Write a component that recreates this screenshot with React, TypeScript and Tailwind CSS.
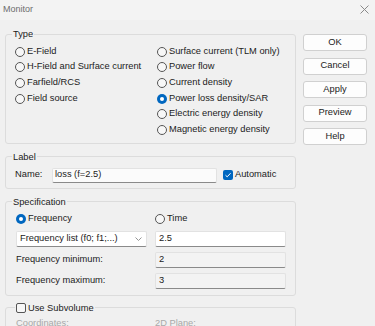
import React from "react";

const font = { fontFamily: '"Liberation Sans", Arial, sans-serif' };

const Radio = ({ checked = false, label }: { checked?: boolean; label: string }) => (
  <div className="flex items-center gap-[2px] h-[15.6px]">
    {checked ? (
      <span className="w-[10px] h-[10px] rounded-full bg-[#0067c0] flex items-center justify-center shrink-0">
        <span className="w-[4px] h-[4px] rounded-full bg-white" />
      </span>
    ) : (
      <span className="w-[10px] h-[10px] rounded-full border border-[#555] bg-[#f7f7f7] shrink-0" />
    )}
    <span className="whitespace-nowrap">{label}</span>
  </div>
);

const Group = ({
  legend,
  children,
  className = "",
  legendClass = "ml-[6px]",
}: {
  legend: React.ReactNode;
  children: React.ReactNode;
  className?: string;
  legendClass?: string;
}) => (
  <fieldset className={`border border-[#dcdcdc] rounded-[3px] ${className}`}>
    <legend className={`px-[1px] leading-[12px] ${legendClass}`}>{legend}</legend>
    {children}
  </fieldset>
);

const Field = ({ value, white = false }: { value: string; white?: boolean }) => (
  <div
    className={`h-[16px] w-[131px] border border-[#e2e2e2] border-b-[#8a8a8a] rounded-[2px] px-[3px] flex items-center ${
      white ? "bg-white" : "bg-[#f3f3f3]"
    }`}
  >
    {value}
  </div>
);

const buttons = ["OK", "Cancel", "Apply", "Preview", "Help"];

export default function App() {
  return (
    <div className="w-[375px] h-[326px] overflow-hidden bg-[#f0f0f0] text-[9.3px] text-[#1b1b1b]" style={font}>
      {/* title bar */}
      <div className="h-[20px] bg-[#f3f3f3] flex items-center justify-between pl-[3px] pr-[6px]">
        <span className="text-[#6e6e6e] text-[9px]">Monitor</span>
        <svg width="9" height="9" viewBox="0 0 9 9" className="-mt-[1px]">
          <path d="M0.5 0.5L8.5 8.5M8.5 0.5L0.5 8.5" stroke="#8a8a8a" strokeWidth="1" />
        </svg>
      </div>

      <div className="flex gap-[7px] pl-[5px] pt-[8px]">
        {/* left panel */}
        <div className="w-[291px] flex flex-col gap-[7px]">
          <Group legend="Type">
            <div className="grid grid-cols-[142px_1fr] pl-[9px] pt-[4px] pb-[5px]">
              <div className="flex flex-col">
                <Radio label="E-Field" />
                <Radio label="H-Field and Surface current" />
                <Radio label="Farfield/RCS" />
                <Radio label="Field source" />
              </div>
              <div className="flex flex-col">
                <Radio label="Surface current (TLM only)" />
                <Radio label="Power flow" />
                <Radio label="Current density" />
                <Radio checked label="Power loss density/SAR" />
                <Radio label="Electric energy density" />
                <Radio label="Magnetic energy density" />
              </div>
            </div>
          </Group>

          <Group legend="Label">
            <div className="flex items-center pl-[9px] pt-[5px] pb-[5px]">
              <span className="w-[37px]">Name:</span>
              <div className="h-[15px] w-[165px] bg-[#fbfbfb] border border-[#e2e2e2] border-b-[#8a8a8a] rounded-[2px] px-[2px] flex items-center">
                loss (f=2.5)
              </div>
              <span className="ml-[6px] w-[10px] h-[10px] rounded-[2px] bg-[#0067c0] flex items-center justify-center">
                <svg width="8" height="8" viewBox="0 0 8 8">
                  <path d="M1.5 4.2L3.2 5.8L6.6 2.2" fill="none" stroke="white" strokeWidth="1" />
                </svg>
              </span>
              <span className="ml-[2px]">Automatic</span>
            </div>
          </Group>

          <Group legend="Specification">
            <div className="pl-[10px] pt-[3px] pb-[6px] flex flex-col">
              <div className="grid grid-cols-[139px_1fr] h-[16px] items-center">
                <Radio checked label="Frequency" />
                <Radio label="Time" />
              </div>
              <div className="grid grid-cols-[139px_1fr] grid-rows-[16px_16px_16px] gap-y-[5px] mt-[4px] items-center">
                <div className="h-[16px] w-[131px] bg-white border border-[#e2e2e2] border-b-[#8a8a8a] rounded-[2px] pl-[3px] pr-[4px] flex items-center justify-between">
                  <span>Frequency list (f0; f1;...)</span>
                  <svg width="7" height="4" viewBox="0 0 7 4">
                    <path d="M0.5 0.5L3.5 3.5L6.5 0.5" fill="none" stroke="#8a8a8a" strokeWidth="0.9" />
                  </svg>
                </div>
                <Field value="2.5" white />
                <span>Frequency minimum:</span>
                <Field value="2" />
                <span>Frequency maximum:</span>
                <Field value="3" />
              </div>
            </div>
          </Group>

          <Group
            legendClass="ml-[9px]"
            className="-mt-[1px]"
            legend={
              <span className="flex items-center gap-[2px]">
                <span className="w-[10px] h-[10px] rounded-[2px] border border-[#555] bg-[#f7f7f7]" />
                <span>Use Subvolume</span>
              </span>
            }
          >
            <div className="grid grid-cols-[139px_1fr] pl-[10px] pt-[3px] text-[#a8a8a8] h-[30px]">
              <span>Coordinates:</span>
              <span>2D Plane:</span>
            </div>
          </Group>
        </div>

        {/* buttons */}
        <div className="w-[64px] flex flex-col gap-[6.5px] pt-[6px]">
          {buttons.map((b) => (
            <div
              key={b}
              className="h-[17px] bg-[#fdfdfd] border border-[#d0d0d0] rounded-[3px] flex items-center justify-center"
            >
              {b}
            </div>
          ))}
        </div>
      </div>
    </div>
  );
}
